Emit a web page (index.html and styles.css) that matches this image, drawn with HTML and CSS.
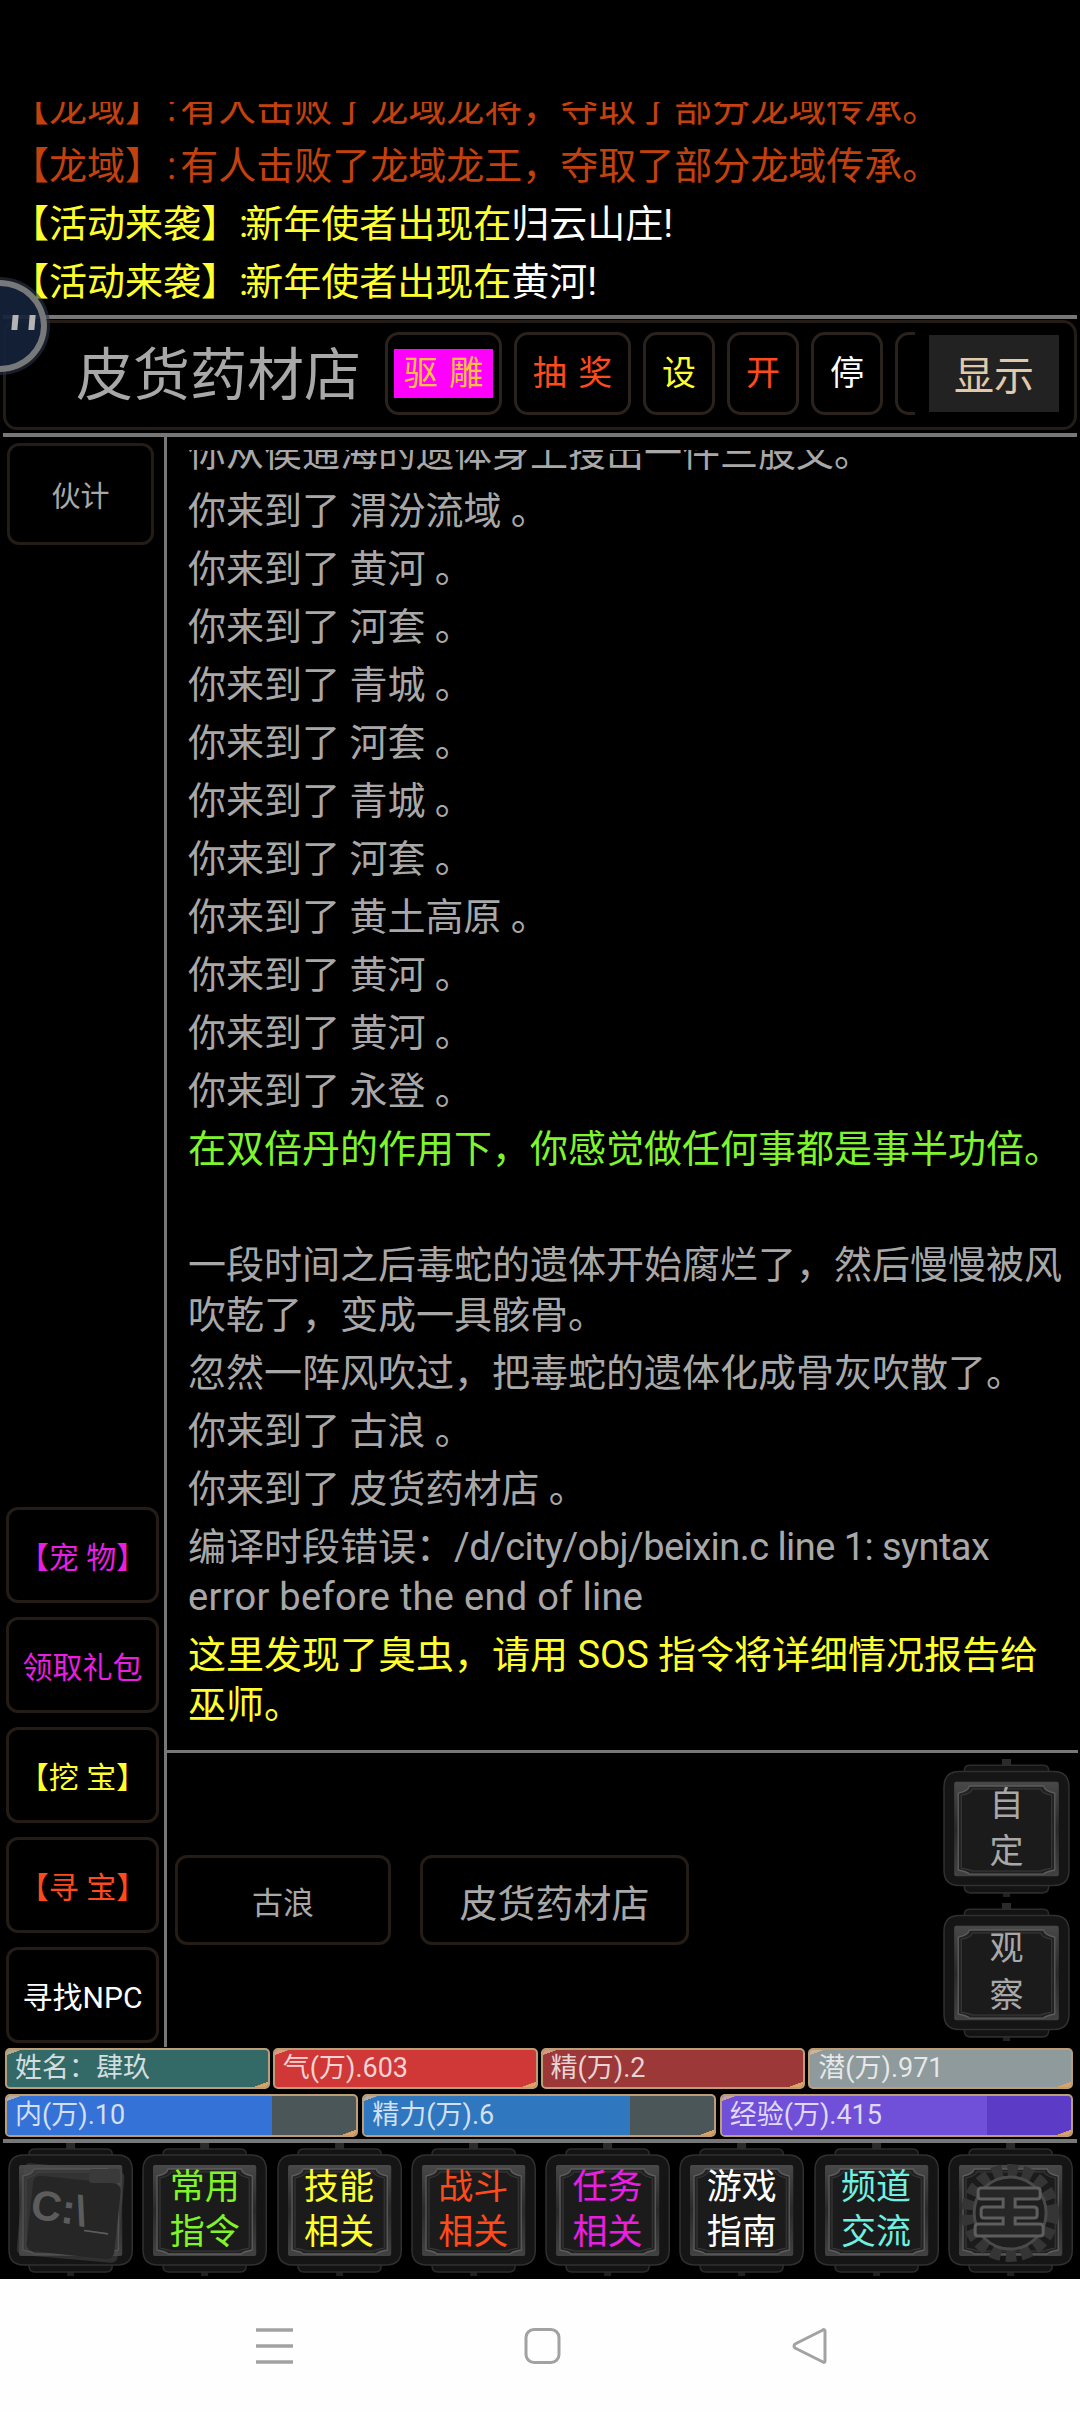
FILE: index.html
```html
<!DOCTYPE html>
<html lang="zh-CN">
<head>
<meta charset="utf-8">
<title>皮货药材店</title>
<link rel="stylesheet" href="styles.css">
</head>
<body>
<svg class="defs" aria-hidden="true">
  <defs>
    <linearGradient id="frameGrad" x1="0" y1="0" x2="0" y2="1">
      <stop offset="0" stop-color="#484848"/>
      <stop offset="0.5" stop-color="#2a2a2a"/>
      <stop offset="1" stop-color="#424242"/>
    </linearGradient>
    <symbol id="btnFrame" viewBox="0 0 125 133" preserveAspectRatio="none">
      <rect x="58" y="0" width="9" height="8" fill="#2b2b2b"/>
      <rect x="59" y="128" width="7" height="5" fill="#222"/>
      <path d="M21 13 v-2 q0-5 6-5 h71 q6 0 6 5 v2z" fill="#131313" stroke="#2c2c2c" stroke-width="1.5"/>
      <path d="M21 121 v2 q0 6 6 6 h71 q6 0 6-6 v-2z" fill="#131313" stroke="#2c2c2c" stroke-width="1.5"/>
      <path d="M16 12 h93 q15 0 15 15 v80 q0 15-15 15 h-93 q-15 0-15-15 v-80 q0-15 15-15z" fill="#151515" stroke="#303030" stroke-width="1.5"/>
      <rect x="11" y="22" width="103" height="91" rx="2" fill="url(#frameGrad)"/>
      <path d="M26 26 h73 q1 5 11 7 v74 q-10 2-11 4 h-73 q-1-2-11-4 v-74 q10-2 11-7z" fill="#222" stroke="#5c5c5c" stroke-width="1.3"/>
      <path d="M29 29 h67 q1 4 11 6 v70 q-10 2-11 3 h-67 q-1-1-11-3 v-70 q10-2 11-6z" fill="#1b1b1b" stroke="#3a3a3a" stroke-width="1"/>
    </symbol>
  </defs>
</svg>
<div class="app">
  <section class="chat">
    <div class="chat-lines">
      <p class="dragon">【龙域】<span class="colon-wide">:</span>有人击败了龙域龙将，夺取了部分龙域传承。</p>
      <p class="dragon">【龙域】<span class="colon-wide">:</span>有人击败了龙域龙王，夺取了部分龙域传承。</p>
      <p class="event">【活动来袭】<span class="colon-tight">:</span>新年使者出现在<span class="white">归云山庄!</span></p>
      <p class="event">【活动来袭】<span class="colon-tight">:</span>新年使者出现在<span class="white">黄河!</span></p>
    </div>
  </section>

  <section class="titlebar">
    <div class="title-panel">
      <h1 class="room">皮货药材店</h1>
      <div class="actions">
        <button class="act wide"><span class="hot">驱 雕</span></button>
        <button class="act wide red">抽 奖</button>
        <button class="act yellow">设</button>
        <button class="act red">开</button>
        <button class="act white">停</button>
        <button class="act yellow">关</button>
      </div>
      <button class="show">显示</button>
    </div>
  </section>

  <main class="main">
    <aside class="side">
      <button class="side-btn npc gray">伙计</button>
      <div class="side-group">
        <button class="side-btn magenta">【宠 物】</button>
        <button class="side-btn magenta">领取礼包</button>
        <button class="side-btn yellow">【挖 宝】</button>
        <button class="side-btn red">【寻 宝】</button>
        <button class="side-btn white">寻找NPC</button>
      </div>
    </aside>
    <div class="content">
      <div class="log-wrap">
        <div class="log">
          <p>你从侯通海的遗体身上搜出一件三股叉。</p>
          <p>你来到了 渭汾流域 。</p>
          <p>你来到了 黄河 。</p>
          <p>你来到了 河套 。</p>
          <p>你来到了 青城 。</p>
          <p>你来到了 河套 。</p>
          <p>你来到了 青城 。</p>
          <p>你来到了 河套 。</p>
          <p>你来到了 黄土高原 。</p>
          <p>你来到了 黄河 。</p>
          <p>你来到了 黄河 。</p>
          <p>你来到了 永登 。</p>
          <p class="green">在双倍丹的作用下，你感觉做任何事都是事半功倍。</p>
          <p class="blank">&nbsp;</p>
          <p>一段时间之后毒蛇的遗体开始腐烂了，然后慢慢被风吹乾了，变成一具骸骨。</p>
          <p>忽然一阵风吹过，把毒蛇的遗体化成骨灰吹散了。</p>
          <p>你来到了 古浪 。</p>
          <p>你来到了 皮货药材店 。</p>
          <p>编译时段错误：<span class="latin-a">/d/city/obj/beixin.c line 1: syntax</span> <span class="latin-b">error before the end of line</span></p>
          <p class="yellow">这里发现了臭虫，请用 SOS 指令将详细情况报告给巫师。</p>
        </div>
      </div>
      <div class="lower">
        <div class="exits">
          <button class="exit small">古浪</button>
          <button class="exit big">皮货药材店</button>
        </div>
        <div class="tools">
          <button class="orn tool"><svg class="orn-bg"><use href="#btnFrame"/></svg><span class="orn-text gray">自<br>定</span></button>
          <button class="orn tool"><svg class="orn-bg"><use href="#btnFrame"/></svg><span class="orn-text gray">观<br>察</span></button>
        </div>
      </div>
    </div>
  </main>

  <section class="stats">
    <div class="row four">
      <div class="bar c-teal"><span class="bar-text">姓名：肆玖</span></div>
      <div class="bar c-red"><span class="bar-text">气(万).603</span></div>
      <div class="bar c-maroon"><span class="bar-text">精(万).2</span></div>
      <div class="bar c-gray"><span class="bar-text">潜(万).971</span></div>
    </div>
    <div class="row three">
      <div class="bar c-slate"><div class="fill f-blue" style="width:76%"></div><span class="bar-text">内(万).10</span></div>
      <div class="bar c-slate"><div class="fill f-steel" style="width:76%"></div><span class="bar-text">精力(万).6</span></div>
      <div class="bar c-indigo"><div class="fill f-purple" style="width:76%"></div><span class="bar-text">经验(万).415</span></div>
    </div>
  </section>

  <nav class="dock">
    <button class="orn">
      <svg class="orn-bg"><use href="#btnFrame"/></svg>
      <svg class="orn-bg" viewBox="0 0 125 133">
        <rect x="12" y="24" width="101" height="92" rx="6" fill="#4c4c4c" opacity=".5" transform="rotate(5 62 70)"/>
        <rect x="22" y="36" width="88" height="76" rx="7" fill="#262626" transform="rotate(6 62 70)"/>
        <rect x="81" y="26" width="31" height="14" rx="3" fill="#3a3a3a"/>
      </svg>
      <span class="cmd">C:\_</span>
    </button>
    <button class="orn"><svg class="orn-bg"><use href="#btnFrame"/></svg><span class="orn-text lime">常用<br>指令</span></button>
    <button class="orn"><svg class="orn-bg"><use href="#btnFrame"/></svg><span class="orn-text yellow">技能<br>相关</span></button>
    <button class="orn"><svg class="orn-bg"><use href="#btnFrame"/></svg><span class="orn-text red">战斗<br>相关</span></button>
    <button class="orn"><svg class="orn-bg"><use href="#btnFrame"/></svg><span class="orn-text magenta">任务<br>相关</span></button>
    <button class="orn"><svg class="orn-bg"><use href="#btnFrame"/></svg><span class="orn-text white">游戏<br>指南</span></button>
    <button class="orn"><svg class="orn-bg"><use href="#btnFrame"/></svg><span class="orn-text aqua">频道<br>交流</span></button>
    <button class="orn" aria-label="设置">
      <svg class="orn-bg"><use href="#btnFrame"/></svg>
      <svg class="orn-bg" viewBox="0 0 125 133">
        <circle cx="62" cy="70" r="42" fill="none" stroke="#353535" stroke-width="14" stroke-dasharray="10 5"/>
        <circle cx="62" cy="70" r="36" fill="#1f1f1f" stroke="#4a4a4a" stroke-width="3"/>
        <path d="M35 45 h54 q3 0 3 3 v5 q0 3-3 3 h-22 v8 h19 q3 0 3 3 v5 q0 3-3 3 h-19 v6 h25 q3 0 3 3 v6 q0 3-3 3 h-62 q-3 0-3-3 v-6 q0-3 3-3 h25 v-6 h-19 q-3 0-3-3 v-5 q0-3 3-3 h19 v-8 h-22 q-3 0-3-3 v-5 q0-3 3-3z" fill="#272727" stroke="#5e5e5e" stroke-width="3"/>
      </svg>
    </button>
  </nav>

  <footer class="navbar">
    <svg class="nav-icon" viewBox="0 0 37 36"><path d="M0 2h37M0 18h37M0 34h37" fill="none" stroke="#a2a2a2" stroke-width="3.6"/></svg>
    <svg class="nav-icon" viewBox="0 0 37 36"><rect x="2" y="1.5" width="33" height="33" rx="8" fill="none" stroke="#a2a2a2" stroke-width="3"/></svg>
    <svg class="nav-icon" viewBox="0 0 37 36"><path d="M33 3 Q33 0.5 30 2.5 L3 16 Q1 18 3 20 L30 33.5 Q33 35.5 33 33z" fill="none" stroke="#a2a2a2" stroke-width="3" stroke-linejoin="round"/></svg>
  </footer>

  <div class="float-ball">
    <i class="quote"></i><i class="quote"></i>
  </div>
</div>
</body>
</html>
```
FILE: styles.css
```css
* { box-sizing: border-box; }
html, body { margin: 0; padding: 0; background: #000; }
body { font-family: Roboto, "Noto Sans CJK SC", sans-serif; color: #a8a8a8; }
p, h1 { margin: 0; font-weight: 400; }
button { font: inherit; background: none; border: 0; padding: 0; color: inherit; }
.defs { display: block; width: 0; height: 0; }

.app { position: relative; width: 1080px; height: 2412px; overflow: hidden; display: flex; flex-direction: column; background: #000; }

.white { color: #fff; }
.yellow { color: #ffff2e; }
.red { color: #ff4a1c; }
.magenta { color: #e81fe0; }
.gray { color: #a8a8a8; }
.lime { color: #80f428; }
.aqua { color: #6ff0e0; }
.green { color: #7ff52c; }

/* chat */
.chat { height: 315px; padding-top: 102px; flex: none; }
.chat-lines { height: 213px; overflow: hidden; display: flex; flex-direction: column; justify-content: flex-end; padding: 0 0 4px 11px; font-size: 38px; line-height: 58px; white-space: nowrap; }
.dragon { color: #c2410f; }
.event { color: #ffff2e; }
.colon-wide { margin: 0 4px; }
.colon-tight { margin-right: -3px; }

/* title */
.titlebar { flex: none; height: 122px; margin: 0 3px; border-top: 4px solid #777; border-bottom: 4px solid #777; padding-bottom: 3px; padding-top: 1px; }
.title-panel { height: 110px; border: 3px solid #241c16; border-radius: 14px; display: flex; align-items: center; padding-left: 70px; }
.room { flex: none; width: 306px; font-size: 57px; line-height: 1; color: #a8a8a8; }
.actions { flex: none; width: 530px; height: 84px; margin: -3px 0 0 3px; overflow: hidden; display: flex; gap: 12px; }
.act { flex: none; width: 72px; height: 83px; border: 3px solid #2a221c; border-radius: 14px; font-size: 34px; line-height: 1; white-space: nowrap; word-spacing: 3px; }
.act.wide { width: 117px; }
.hot { display: inline-block; background: #ff00ff; color: #ffc040; padding: 0 10px; line-height: 49px; height: 49px; }
.show { flex: none; width: 130px; height: 77px; margin: -4px 0 0 14px; background: #222; color: #e2c9a9; font-size: 40px; }

/* main */
.main { display: flex; height: 1610px; flex: none; }
.side { flex: none; width: 167px; border-right: 3px solid #777; padding: 6px 5px 4px 6px; display: flex; flex-direction: column; }
.side-btn { display: block; width: 153px; height: 96px; border: 3px solid #241c16; border-radius: 12px; font-size: 30px; white-space: nowrap; }
.side-btn.npc { width: 147px; height: 102px; margin-left: 1px; font-size: 29px; }
.side-group { margin-top: auto; display: flex; flex-direction: column; gap: 14px; }

.content { flex: 1 1 0; min-width: 0; display: flex; flex-direction: column; padding-right: 2px; }
.log-wrap { flex: none; height: 1316px; padding-top: 13px; border-bottom: 3px solid #777; }
.log { height: 1300px; overflow: hidden; display: flex; flex-direction: column; justify-content: flex-end; padding: 0 10px 12px 21px; font-size: 38px; line-height: 50px; }
.log p { margin-bottom: 8px; }
.latin-a { letter-spacing: -.55px; }
.latin-b { letter-spacing: .3px; }

.lower { flex: 1 1 0; display: flex; justify-content: space-between; padding: 6px 8px 0 8px; }
.exits { display: flex; gap: 29px; padding-top: 96px; align-items: flex-start; }
.exit { height: 90px; border: 3px solid #241c16; border-radius: 12px; color: #a8a8a8; }
.exit.small { width: 216px; font-size: 31px; }
.exit.big { width: 269px; font-size: 38px; }
.tools { display: flex; flex-direction: column; gap: 6px; }

/* ornamental buttons */
.orn { display: grid; place-items: center; width: 100%; height: 133px; }
.orn > * { grid-area: 1 / 1; }
.orn-bg { display: block; width: 100%; height: 100%; }
.orn-text { font-size: 35px; line-height: 45px; z-index: 1; }
.tool { width: 127px; height: 138px; }
.tool .orn-text { line-height: 47px; font-size: 34px; }
.cmd { z-index: 1; font: 700 42px/1 "Liberation Sans", sans-serif; color: #5c5c5c; transform: rotate(8deg); white-space: nowrap; }

/* stats */
.stats { flex: none; display: flex; flex-direction: column; gap: 5px; padding: 1px 7px 0 5px; }
.row { display: grid; gap: 3px; }
.four { grid-template-columns: repeat(4, 1fr); height: 41px; }
.three { grid-template-columns: repeat(3, 1fr); height: 43px; gap: 4px; }
.bar { position: relative; display: grid; align-items: center; border: 2px solid #bb9e78; border-radius: 5px; overflow: hidden; min-width: 0; }
.bar > * { grid-area: 1 / 1; }
.bar::before, .bar::after { content: ""; position: absolute; width: 16px; height: 7px; }
.bar::before { left: 0; top: 0; background: linear-gradient(160deg, rgba(225,190,150,.75) 0 38%, transparent 40%); }
.bar::after { right: 0; bottom: 0; background: linear-gradient(160deg, transparent 58%, #d9a368 60%); }
.bar-text { z-index: 1; padding-left: 8px; font-size: 27px; line-height: 1; color: rgba(255,255,255,.78); white-space: nowrap; }
.fill { height: 100%; }
.c-teal { background: #336a68; }
.c-red { background: #d03838; }
.c-maroon { background: #9c3838; }
.c-gray { background: #8e9a9c; }
.c-slate { background: #4b5658; }
.c-indigo { background: #5c3cc6; }
.f-blue { background: #3572d8; }
.f-steel { background: #2f78c0; }
.f-purple { background: #7050d8; }

/* dock */
.dock { flex: none; margin: 2px 3px 0; height: 140px; border-top: 4px solid #777; display: grid; grid-template-columns: repeat(8, 1fr); gap: 9px; padding: 0 4px 0 5px; align-items: start; }

/* android nav */
.navbar { flex: 1 1 0; background: #fefefe; display: grid; grid-template-columns: repeat(3, 268px); justify-content: center; justify-items: center; align-items: center; padding-left: 4px; }
.nav-icon { display: block; width: 37px; height: 36px; }

/* floating ball */
.float-ball { position: absolute; left: -47px; top: 280px; width: 94px; height: 92px; border-radius: 50%; background: rgba(20,34,58,.92); border: 6px solid rgba(130,130,130,.9); box-shadow: 0 0 0 3px rgba(40,50,70,.6); display: flex; justify-content: flex-end; gap: 11px; padding: 29px 6px 0 0; }
.quote { display: block; width: 6px; height: 15px; background: #b4b4b4; transform: skewX(-5deg); }
```
